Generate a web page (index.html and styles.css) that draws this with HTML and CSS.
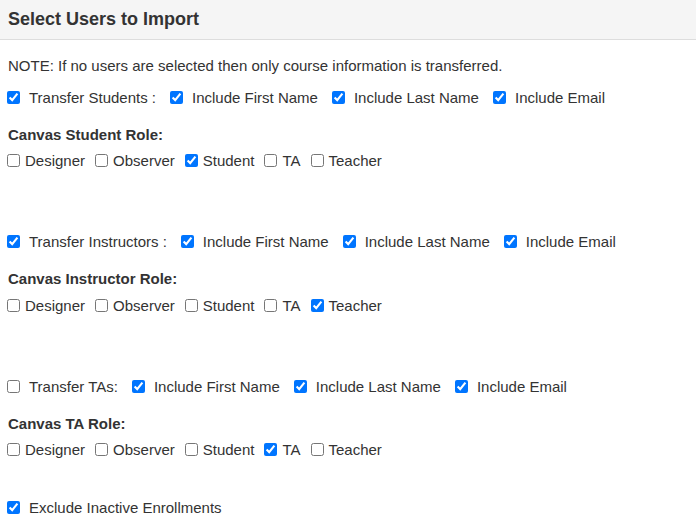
FILE: index.html
```html
<!DOCTYPE html>
<html lang="en">
<head>
    <meta charset="UTF-8">
    <title>Select Users to Import</title>
    <link rel="stylesheet" href="styles.css">
</head>
<body>
    <div class="panel-heading">Select Users to Import</div>

    <div class="panel-body">
        <p class="note">NOTE: If no users are selected then only course information is transferred.</p>

        <!-- Students -->
        <div class="transfer-row">
            <label class="opt first"><input type="checkbox" checked><span>Transfer Students :</span></label>
            <label class="opt"><input type="checkbox" checked><span>Include First Name</span></label>
            <label class="opt"><input type="checkbox" checked><span>Include Last Name</span></label>
            <label class="opt"><input type="checkbox" checked><span>Include Email</span></label>
        </div>
        <div class="role-title">Canvas Student Role:</div>
        <div class="role-row">
            <label class="role"><input type="checkbox"><span>Designer</span></label>
            <label class="role"><input type="checkbox"><span>Observer</span></label>
            <label class="role"><input type="checkbox" checked><span>Student</span></label>
            <label class="role"><input type="checkbox"><span>TA</span></label>
            <label class="role"><input type="checkbox"><span>Teacher</span></label>
        </div>

        <!-- Instructors -->
        <div class="transfer-row group">
            <label class="opt first"><input type="checkbox" checked><span>Transfer Instructors :</span></label>
            <label class="opt"><input type="checkbox" checked><span>Include First Name</span></label>
            <label class="opt"><input type="checkbox" checked><span>Include Last Name</span></label>
            <label class="opt"><input type="checkbox" checked><span>Include Email</span></label>
        </div>
        <div class="role-title">Canvas Instructor Role:</div>
        <div class="role-row">
            <label class="role"><input type="checkbox"><span>Designer</span></label>
            <label class="role"><input type="checkbox"><span>Observer</span></label>
            <label class="role"><input type="checkbox"><span>Student</span></label>
            <label class="role"><input type="checkbox"><span>TA</span></label>
            <label class="role"><input type="checkbox" checked><span>Teacher</span></label>
        </div>

        <!-- TAs -->
        <div class="transfer-row group">
            <label class="opt first"><input type="checkbox"><span>Transfer TAs:</span></label>
            <label class="opt"><input type="checkbox" checked><span>Include First Name</span></label>
            <label class="opt"><input type="checkbox" checked><span>Include Last Name</span></label>
            <label class="opt"><input type="checkbox" checked><span>Include Email</span></label>
        </div>
        <div class="role-title">Canvas TA Role:</div>
        <div class="role-row">
            <label class="role"><input type="checkbox"><span>Designer</span></label>
            <label class="role"><input type="checkbox"><span>Observer</span></label>
            <label class="role"><input type="checkbox"><span>Student</span></label>
            <label class="role"><input type="checkbox" checked><span>TA</span></label>
            <label class="role"><input type="checkbox"><span>Teacher</span></label>
        </div>

        <div class="transfer-row exclude">
            <label class="opt first"><input type="checkbox" checked><span>Exclude Inactive Enrollments</span></label>
        </div>
    </div>
</body>
</html>
```

FILE: styles.css
```css
body {
    font-family: "Liberation Sans", Arial, sans-serif;
    font-size: 15px;
    color: #333;
    background-color: #fff;
    margin: 0;
    padding: 0;
}

.panel-heading {
    height: 39px;
    display: flex;
    align-items: center;
    padding: 0 8px;
    background-color: #f5f5f5;
    border-bottom: 1px solid #ddd;
    font-size: 18px;
    font-weight: bold;
    color: #333;
}

.panel-body {
    padding: 0 8px;
}

.note {
    margin: 16px 0 0;
    line-height: 20px;
}

input[type="checkbox"] {
    width: 13px;
    height: 13px;
    margin: 0;
    flex-shrink: 0;
}

.transfer-row {
    display: flex;
    align-items: center;
    height: 20px;
    margin-top: 11px;
}

.transfer-row.group {
    margin-top: 61px;
}

.transfer-row.exclude {
    margin-top: 38px;
}

.opt {
    display: flex;
    align-items: center;
    margin-left: 14px;
}

.opt.first {
    margin-left: -1px;
}

.opt span {
    margin-left: 9px;
}

.role-title {
    font-weight: bold;
    line-height: 20px;
    margin-top: 17.5px;
}

.role-row {
    display: flex;
    align-items: center;
    height: 20px;
    margin-top: 6px;
    margin-left: -1px;
}

.role {
    display: flex;
    align-items: center;
    margin-right: 10px;
}

.role span {
    margin-left: 5px;
}
```
